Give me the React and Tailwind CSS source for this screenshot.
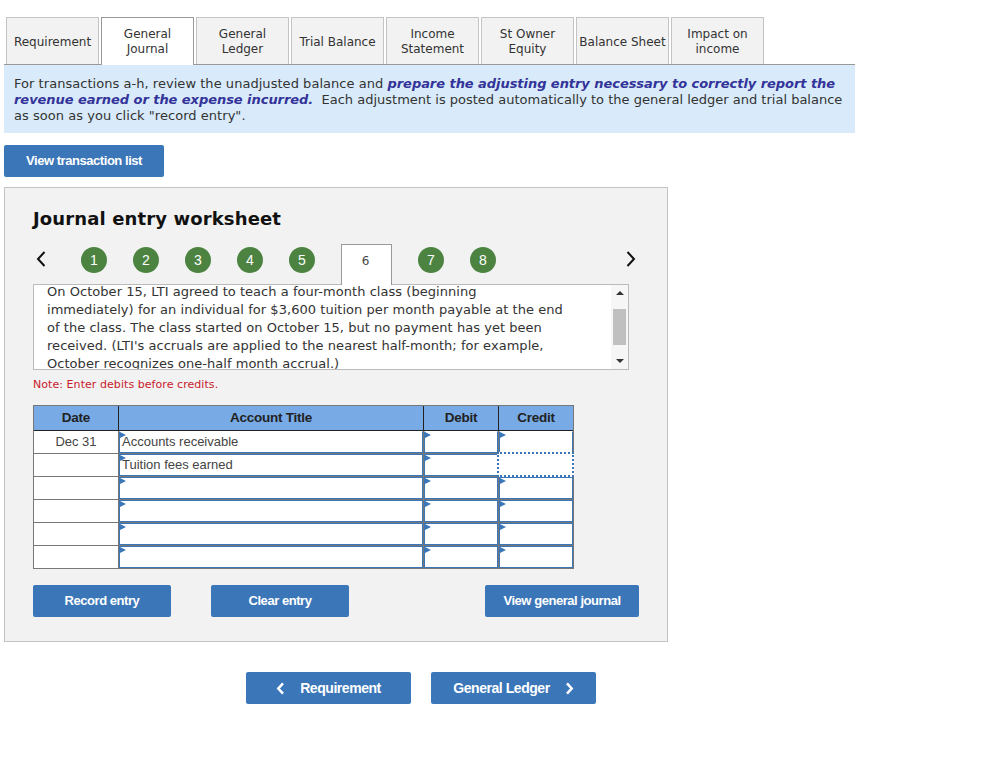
import React from "react";

const tabs = [
  ["Requirement"],
  ["General", "Journal"],
  ["General", "Ledger"],
  ["Trial Balance"],
  ["Income", "Statement"],
  ["St Owner", "Equity"],
  ["Balance Sheet"],
  ["Impact on", "income"],
];

const Btn = ({ w, children, cls = "" }) => (
  <button className={`${w} h-8 rounded-[2px] bg-[#3b76b9] text-white font-['Liberation_Sans',sans-serif] font-bold text-[13px] tracking-[-0.45px] flex items-center justify-center ${cls}`}>
    {children}
  </button>
);

const Circle = ({ n }) => (
  <div className="w-[26px] h-[26px] rounded-full bg-[#4c8341] text-white text-[14px] flex items-center justify-center font-['Liberation_Sans',sans-serif]">
    {n}
  </div>
);

const Chevron = ({ left, cls = "", sw = 2 }) => (
  <svg width="12" height="18" viewBox="0 0 12 18" className={cls} fill="none" stroke="currentColor" strokeWidth={sw}>
    <path d={left ? "M9.5 2 L3 9 L9.5 16" : "M2.5 2 L9 9 L2.5 16"} />
  </svg>
);

const Cell = ({ w, text, dotted, first, last, noRight }) => (
  <div className={`${w} h-full relative box-border border-[#777] ${last ? "" : "border-b"} ${noRight ? "" : "border-r"}`}>
    <div
      className={`h-full relative box-border bg-white pl-[2px] text-[13px] leading-[19px] text-[#444] whitespace-nowrap border border-[#3b76b9] ${
        first ? "border-t-white" : ""
      }`}
    >
      {!dotted && (
        <span className="absolute left-0 top-0 w-0 h-0 border-y-[3.5px] border-y-transparent border-l-[6px] border-l-[#3b76b9]" />
      )}
      {text}
    </div>
    {dotted && (
      <div className="absolute -left-[2px] -right-[1px] -top-[2px] -bottom-[1px] bg-white border-2 border-dotted border-[#3b76b9] z-10" />
    )}
  </div>
);

const rows = [
  ["Dec 31", "Accounts receivable"],
  ["", "Tuition fees earned"],
  ["", ""],
  ["", ""],
  ["", ""],
  ["", ""],
];

export default function App() {
  return (
    <div className="w-[988px] h-[776px] bg-white font-['DejaVu_Sans',sans-serif] text-[#333] pl-1 pt-[17px] overflow-hidden">
      <div className="w-[851px] h-[48px] flex gap-[2px] pl-[2px] border-b border-[#999] box-border">
        {tabs.map((t, i) => (
          <div
            key={i}
            className={`w-[93px] text-[12px] leading-[15px] text-center flex flex-col items-center justify-center border border-b-0 whitespace-nowrap ${
              i === 1 ? "h-[48px] bg-white border-[#999] relative z-10" : "h-[47px] pt-[2px] bg-[#f2f2f2] border-[#c4c4c4]"
            }`}
          >
            {t.map((l) => (
              <span key={l}>{l}</span>
            ))}
          </div>
        ))}
      </div>

      <div className="w-[851px] h-[68px] bg-[#d9ebfa] px-[10px] pt-[11px] text-[13px] leading-[16px] tracking-[0.04px] text-[#333] whitespace-nowrap">
        For transactions a-h, review the unadjusted balance and{" "}
        <b className="italic text-[#333399] tracking-[-0.05px]">
          prepare the adjusting entry necessary to correctly report the
          <br />
          revenue earned or the expense incurred.
        </b>
        <span className="tracking-[0px]">{"\u00A0 "}Each adjustment is posted automatically to the general ledger and trial balance</span>
        <br />
        as soon as you click "record entry".
      </div>

      <Btn w="w-[160px]" cls="mt-3">View transaction list</Btn>

      <div className="mt-[10px] w-[664px] h-[455px] bg-[#f2f2f2] border border-[#c4c4c4] pl-[28px]">
        <h2 className="pt-[19px] text-[18px] leading-[24px] font-bold tracking-[0.13px] text-[#111]">Journal entry worksheet</h2>

        <div className="mt-[13px] h-[40px] flex items-start">
          <Chevron left cls="mt-[6px] ml-[2px] mr-[34px] text-[#111]" />
          <div className="flex items-start gap-[26px] mt-[3px]">
            {[1, 2, 3, 4, 5].map((n) => (
              <Circle key={n} n={n} />
            ))}
            <div className="w-[51px] h-[41px] mt-[-3px] bg-white border border-b-0 border-[#999] relative z-10 text-[12px] flex items-center justify-center pb-[8px] pr-[2px] text-[#444]">
              6
            </div>
            <Circle n={7} />
            <Circle n={8} />
          </div>
          <Chevron cls="mt-[6px] ml-[129px] text-[#111]" />
        </div>

        <div className="w-[596px] h-[86px] bg-white border border-[#bbb] flex overflow-hidden">
          <div className="flex-1 pl-[13px] mt-[-2px] text-[13px] leading-[18px] tracking-[0.04px] text-[#333] h-[90px] whitespace-nowrap">
            On October 15, LTI agreed to teach a four-month class (beginning
            <br />
            immediately) for an individual for $3,600 tuition per month payable at the end
            <br />
            of the class. The class started on October 15, but no payment has yet been
            <br />
            received. (LTI's accruals are applied to the nearest half-month; for example,
            <br />
            October recognizes one-half month accrual.)
          </div>
          <div className="w-[17px] bg-[#f6f6f6] flex flex-col items-center justify-between py-[6px]">
            <span className="w-0 h-0 border-x-[4px] border-x-transparent border-b-[4px] border-b-[#333]" />
            <span className="w-[13px] h-[36px] bg-[#c0c0c0]" />
            <span className="w-0 h-0 border-x-[4px] border-x-transparent border-t-[4px] border-t-[#333]" />
          </div>
        </div>

        <p className="mt-[8px] text-[11px] leading-[14px] tracking-[0.06px] text-[#c8202a]">Note: Enter debits before credits.</p>

        <div className="mt-[13px] w-[541px] border border-[#777] font-['Liberation_Sans',sans-serif] text-[14px]">
          <div className="flex h-[25px] bg-[#78abe6] border-b border-[#222] text-[#222] font-bold text-[13.5px] tracking-[-0.25px]">
            <div className="w-[85px] border-r border-[#222] flex items-center justify-center">Date</div>
            <div className="w-[305px] border-r border-[#222] flex items-center justify-center">Account Title</div>
            <div className="w-[75px] border-r border-[#222] flex items-center justify-center">Debit</div>
            <div className="flex-1 flex items-center justify-center">Credit</div>
          </div>
          {rows.map(([d, a], i) => (
            <div key={i} className={`flex bg-white ${i === 5 ? "h-[22px]" : "h-[23px]"}`}>
              <div className={`w-[85px] border-r border-[#777] ${i < 5 ? "border-b" : ""} text-center text-[13px] leading-[22px] text-[#444]`}>{d}</div>
              <Cell w="w-[305px]" text={a} first={i === 0} last={i === 5} />
              <Cell w="w-[75px]" first={i === 0} last={i === 5} />
              <Cell w="flex-1" first={i === 0} last={i === 5} dotted={i === 1} noRight />
            </div>
          ))}
        </div>

        <div className="mt-[16px] flex">
          <Btn w="w-[138px]">Record entry</Btn>
          <Btn w="w-[138px]" cls="ml-10">Clear entry</Btn>
          <Btn w="w-[154px]" cls="ml-[136px]">View general journal</Btn>
        </div>
      </div>

      <div className="mt-[30px] ml-[242px] flex gap-5">
        <Btn w="w-[165px]" cls="gap-[15px] text-[14px]">
          <Chevron left sw={3.5} cls="w-[9px] h-[13px]" /> Requirement
        </Btn>
        <Btn w="w-[165px]" cls="gap-[15px] text-[14px]">
          General Ledger <Chevron sw={3.5} cls="w-[9px] h-[13px]" />
        </Btn>
      </div>
    </div>
  );
}
